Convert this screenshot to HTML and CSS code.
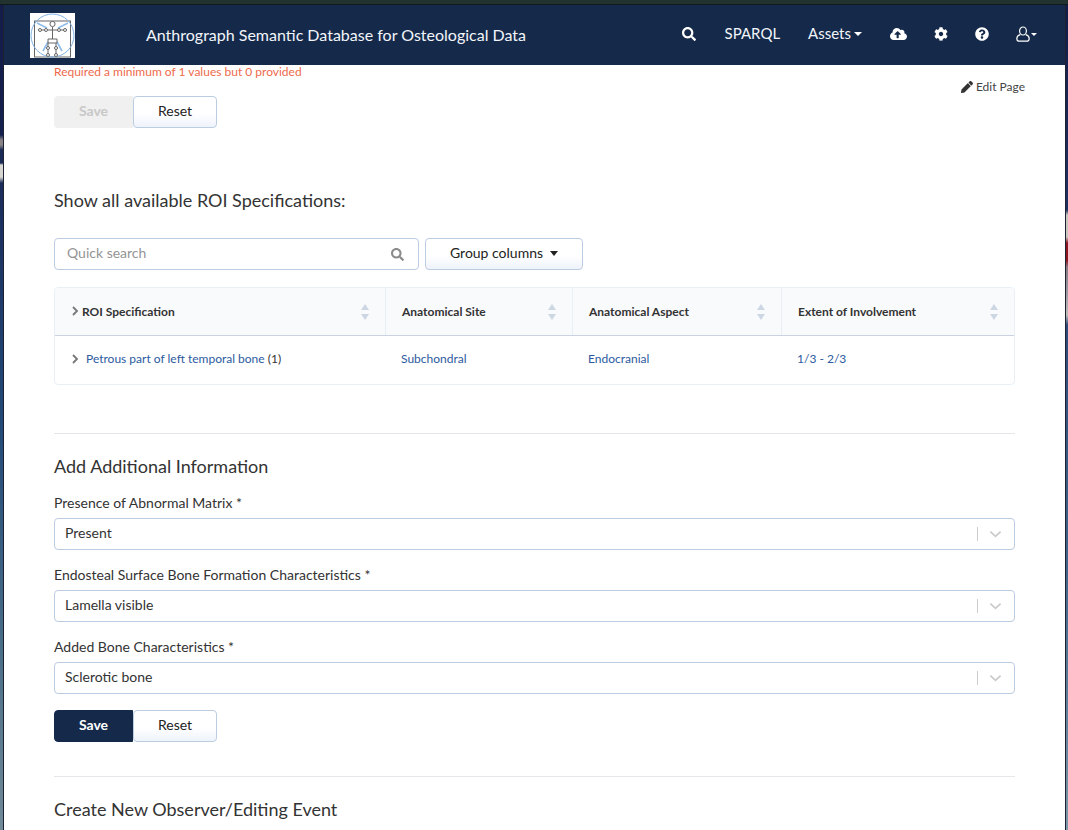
FILE: index.html
```html
<!DOCTYPE html>
<html lang="en">
<head>
    <meta charset="UTF-8">
    <meta name="viewport" content="width=device-width, initial-scale=1.0">
    <title>Anthrograph Semantic Database for Osteological Data</title>
    <link rel="stylesheet" href="styles.css">
</head>
<body>
    <div class="desk-top"></div>
    <div class="desk">
        <div class="desk-side desk-left"></div>
        <div class="window">
            <nav class="navbar">
                <div class="logo">
                    <svg width="45" height="45" viewBox="0 0 45 45">
                        <rect x="4.5" y="8" width="36" height="36" fill="none" stroke="#666" stroke-width="1"/>
                        <circle cx="22.5" cy="22.5" r="21.5" fill="none" stroke="#7fb2e5" stroke-width="1"/>
                        <path d="M7 10l10 5M38 10l-10 5M13 38l5-9M32 38l-5-9" fill="none" stroke="#8fbcea" stroke-width="1.6"/>
                        <circle cx="22.5" cy="11" r="2.6" fill="#fff" stroke="#666" stroke-width="1"/>
                        <path d="M22.5 14v12M8 17h29M18 26h9v4h-9zM18 30v13M26 30v13" fill="none" stroke="#666" stroke-width="1"/>
                        <circle cx="10" cy="17" r="1.5" fill="#fff" stroke="#666"/>
                        <circle cx="16" cy="17" r="1.5" fill="#fff" stroke="#666"/>
                        <circle cx="29" cy="17" r="1.5" fill="#fff" stroke="#666"/>
                        <circle cx="35" cy="17" r="1.5" fill="#fff" stroke="#666"/>
                        <circle cx="18" cy="35" r="1.5" fill="#fff" stroke="#666"/>
                        <circle cx="26" cy="35" r="1.5" fill="#fff" stroke="#666"/>
                        <circle cx="18" cy="42" r="1.5" fill="#fff" stroke="#666"/>
                        <circle cx="26" cy="42" r="1.5" fill="#fff" stroke="#666"/>
                    </svg>
                </div>
                <div class="brand">Anthrograph Semantic Database for Osteological Data</div>
                <div class="nav-items">
                    <svg class="nav-search" viewBox="0 0 512 512"><path d="M505 442.7L405.3 343c-4.5-4.5-10.6-7-17-7H372c27.6-35.3 44-79.7 44-128C416 93.1 322.9 0 208 0S0 93.1 0 208s93.1 208 208 208c48.3 0 92.7-16.4 128-44v16.3c0 6.4 2.5 12.5 7 17l99.7 99.7c9.4 9.4 24.6 9.4 33.9 0l28.3-28.3c9.4-9.4 9.4-24.6.1-34zM208 336c-70.7 0-128-57.2-128-128 0-70.7 57.2-128 128-128 70.7 0 128 57.2 128 128 0 70.7-57.2 128-128 128z"/></svg>
                    <span class="nav-sparql">SPARQL</span>
                    <span class="nav-assets">Assets<i class="caret"></i></span>
                    <svg class="nav-cloud" viewBox="0 0 640 512"><path d="M537.6 226.6c4.1-10.7 6.4-22.4 6.4-34.6 0-53-43-96-96-96-19.7 0-38.1 6-53.3 16.2C367 64.2 315.3 32 256 32c-88.4 0-160 71.6-160 160 0 2.7.1 5.4.2 8.1C40.2 219.8 0 273.2 0 336c0 79.5 64.5 144 144 144h368c70.7 0 128-57.3 128-128 0-61.9-44-113.6-102.4-125.4zM393.4 288H328v112c0 8.8-7.2 16-16 16h-48c-8.8 0-16-7.2-16-16V288h-65.4c-14.3 0-21.4-17.2-11.3-27.3l105.4-105.4c6.2-6.2 16.4-6.2 22.6 0l105.4 105.4c10.1 10.1 2.9 27.3-11.3 27.3z"/></svg>
                    <svg class="nav-cog" viewBox="0 0 512 512"><path d="M487.4 315.7l-42.6-24.6c4.3-23.2 4.3-47 0-70.2l42.6-24.6c4.9-2.8 7.1-8.6 5.5-14-11.1-35.6-30-67.8-54.7-94.6-3.8-4.1-10-5.1-14.8-2.3L380.8 110c-17.9-15.4-38.5-27.3-60.8-35.1V25.8c0-5.6-3.9-10.5-9.4-11.7-36.7-8.2-74.3-7.8-109.2 0-5.5 1.2-9.4 6.1-9.4 11.7V75c-22.2 7.9-42.8 19.8-60.8 35.1L88.7 85.5c-4.9-2.8-11-1.9-14.8 2.3-24.7 26.7-43.6 58.9-54.7 94.6-1.7 5.4.6 11.2 5.5 14L67.3 221c-4.3 23.2-4.3 47 0 70.2l-42.6 24.6c-4.9 2.8-7.1 8.6-5.5 14 11.1 35.6 30 67.8 54.7 94.6 3.8 4.1 10 5.1 14.8 2.3l42.6-24.6c17.9 15.4 38.5 27.3 60.8 35.1v49.2c0 5.6 3.9 10.5 9.4 11.7 36.7 8.2 74.3 7.8 109.2 0 5.5-1.2 9.4-6.1 9.4-11.7v-49.2c22.2-7.9 42.8-19.8 60.8-35.1l42.6 24.6c4.9 2.8 11 1.9 14.8-2.3 24.7-26.7 43.6-58.9 54.7-94.6 1.5-5.5-.7-11.3-5.6-14.1zM256 336c-44.1 0-80-35.9-80-80s35.9-80 80-80 80 35.9 80 80-35.9 80-80 80z"/></svg>
                    <svg class="nav-help" viewBox="0 0 512 512"><path d="M504 256c0 136.997-111.043 248-248 248S8 392.997 8 256C8 119.083 119.043 8 256 8s248 111.083 248 248zM262.655 90c-54.497 0-89.255 22.957-116.549 63.758-3.536 5.286-2.353 12.415 2.715 16.258l34.699 26.31c5.205 3.947 12.621 3.008 16.665-2.122 17.864-22.658 30.113-35.797 57.303-35.797 20.429 0 45.698 13.148 45.698 32.958 0 14.976-12.363 22.667-32.534 33.976C247.128 238.528 216 254.941 216 296v4c0 6.627 5.373 12 12 12h56c6.627 0 12-5.373 12-12v-1.333c0-28.462 83.186-29.647 83.186-106.667 0-58.002-60.165-102-116.531-102zM256 338c-25.365 0-46 20.635-46 46 0 25.364 20.635 46 46 46s46-20.636 46-46c0-25.365-20.635-46-46-46z"/></svg>
                    <span class="nav-user">
                        <svg viewBox="0 0 14 16" width="14" height="16"><ellipse cx="7" cy="5" rx="3.4" ry="4" fill="none" stroke="#fff" stroke-width="1.2"/><path d="M4.2 8.6C2 9.4 .8 10.6.8 12.4c0 1.8 1 2.8 2.6 2.8h7.2c1.6 0 2.6-1 2.6-2.8 0-1.8-1.2-3-3.4-3.8" fill="none" stroke="#fff" stroke-width="1.2"/></svg><i class="caret caret-small"></i>
                    </span>
                </div>
            </nav>

            <main class="content">
                <div class="top-row">
                    <div>
                        <div class="error-text">Required a minimum of 1 values but 0 provided</div>
                        <div class="btn-row">
                            <button class="btn btn-disabled">Save</button>
                            <button class="btn btn-light">Reset</button>
                        </div>
                    </div>
                    <div class="edit-page">
                        <svg viewBox="0 0 512 512"><path d="M497.9 142.1l-46.1 46.1c-4.7 4.7-12.3 4.7-17 0l-111-111c-4.7-4.7-4.7-12.3 0-17l46.1-46.1c18.7-18.7 49.1-18.7 67.9 0l60.1 60.1c18.8 18.7 18.8 49.1 0 67.9zM284.2 99.8L21.6 362.4.4 483.9c-2.9 16.4 11.4 30.6 27.8 27.8l121.5-21.3 262.6-262.6c4.7-4.7 4.7-12.3 0-17l-111-111c-4.8-4.7-12.4-4.7-17.1 0z"/></svg>
                        Edit Page
                    </div>
                </div>

                <h2 class="section-title roi-title">Show all available ROI Specifications:</h2>

                <div class="toolbar">
                    <div class="quick-search">
                        <span>Quick search</span>
                        <svg viewBox="0 0 512 512"><path d="M505 442.7L405.3 343c-4.5-4.5-10.6-7-17-7H372c27.6-35.3 44-79.7 44-128C416 93.1 322.9 0 208 0S0 93.1 0 208s93.1 208 208 208c48.3 0 92.7-16.4 128-44v16.3c0 6.4 2.5 12.5 7 17l99.7 99.7c9.4 9.4 24.6 9.4 33.9 0l28.3-28.3c9.4-9.4 9.4-24.6.1-34zM208 336c-70.7 0-128-57.2-128-128 0-70.7 57.2-128 128-128 70.7 0 128 57.2 128 128 0 70.7-57.2 128-128 128z"/></svg>
                    </div>
                    <button class="btn btn-light btn-group">Group columns<i class="caret caret-dark"></i></button>
                </div>

                <div class="table">
                    <div class="table-head">
                        <div class="th th-first">
                            <svg class="chev" viewBox="0 0 8 12"><path d="M2 2l4 4-4 4" fill="none" stroke="#777" stroke-width="1.8"/></svg>
                            <span>ROI Specification</span>
                            <i class="sort"></i>
                        </div>
                        <div class="th"><span>Anatomical Site</span><i class="sort"></i></div>
                        <div class="th"><span>Anatomical Aspect</span><i class="sort"></i></div>
                        <div class="th th-last"><span>Extent of Involvement</span><i class="sort"></i></div>
                    </div>
                    <div class="table-row">
                        <div class="td td-first">
                            <svg class="chev" viewBox="0 0 8 12"><path d="M2 2l4 4-4 4" fill="none" stroke="#777" stroke-width="1.8"/></svg>
                            <span class="link">Petrous part of left temporal bone</span>&nbsp;<span class="count">(1)</span>
                        </div>
                        <div class="td link">Subchondral</div>
                        <div class="td link">Endocranial</div>
                        <div class="td link">1/3 - 2/3</div>
                    </div>
                </div>

                <hr class="divider divider-info">

                <h2 class="section-title">Add Additional Information</h2>

                <div class="field field-first">
                    <label>Presence of Abnormal Matrix *</label>
                    <div class="select"><span>Present</span><i class="select-sep"></i><svg viewBox="0 0 14 8"><path d="M1.5 1.5L7 6.5l5.5-5" fill="none" stroke="#ccc" stroke-width="2"/></svg></div>
                </div>
                <div class="field">
                    <label>Endosteal Surface Bone Formation Characteristics *</label>
                    <div class="select"><span>Lamella visible</span><i class="select-sep"></i><svg viewBox="0 0 14 8"><path d="M1.5 1.5L7 6.5l5.5-5" fill="none" stroke="#ccc" stroke-width="2"/></svg></div>
                </div>
                <div class="field">
                    <label>Added Bone Characteristics *</label>
                    <div class="select"><span>Sclerotic bone</span><i class="select-sep"></i><svg viewBox="0 0 14 8"><path d="M1.5 1.5L7 6.5l5.5-5" fill="none" stroke="#ccc" stroke-width="2"/></svg></div>
                </div>

                <div class="btn-row btn-row-form">
                    <button class="btn btn-primary">Save</button>
                    <button class="btn btn-light">Reset</button>
                </div>

                <hr class="divider divider-event">

                <h2 class="section-title">Create New Observer/Editing Event</h2>
            </main>
        </div>
        <div class="desk-side desk-right"></div>
    </div>
</body>
</html>
```

FILE: styles.css
```css
html, body {
    margin: 0;
    height: 830px;
    overflow: hidden;
}
body {
    font-family: Lato, "Open Sans", sans-serif;
    font-size: 14px;
    color: #333;
    background: #1a2a50;
}
.desk-top {
    height: 4px;
    background: #22322f;
    border-bottom: 1px solid #0e1a1c;
}
.desk {
    display: flex;
    height: 825px;
}
.desk-side {
    width: 3px;
    flex: none;
    border-style: solid;
    border-color: #1c2233;
    border-width: 0;
}
.desk-left {
    border-right-width: 1px;
    background: linear-gradient(180deg, #141c48 0, #14204e 130px, #8a8488 135px, #8a8488 140px, #1a2a55 145px, #1a2a55 158px, #d8d6d0 160px, #d8d6d0 172px, #1a2c5a 178px, #234a78 420px, #4a6e88 640px, #708a98 825px);
}
.desk-right {
    border-left-width: 1px;
    width: 2px;
    background: linear-gradient(180deg, #141c48 0, #1e3060 205px, #c8c8c0 210px, #c8c8c0 232px, #8e1420 238px, #8e1420 255px, #8a7a80 262px, #9a96a0 285px, #c0bcb8 310px, #2e4a78 320px, #3e6488 560px, #7d98a8 825px);
}
.window {
    flex: 1;
    min-width: 0;
    background: #fff;
    overflow: hidden;
}

/* navbar */
.navbar {
    display: flex;
    align-items: center;
    height: 60px;
    padding: 0 28px 0 26px;
    background: #152a4a;
    color: #f2f5fa;
}
.logo {
    width: 45px;
    height: 45px;
    background: #fff;
}
.logo svg {
    display: block;
}
.brand {
    margin-left: 71px;
    font-size: 16px;
    line-height: 24px;
}
.nav-items {
    display: flex;
    align-items: center;
    margin-left: auto;
    margin-bottom: 2px;
    font-size: 15px;
}
.nav-items svg {
    fill: #fff;
    display: block;
}
.nav-search { width: 14px; height: 14px; margin-right: 29px; }
.nav-sparql { margin-bottom: 2px; }
.nav-assets { margin-left: 28px; margin-right: 28px; margin-bottom: 2px; }
.nav-cloud { width: 17px; height: 14px; margin-right: 27px; }
.nav-cog { width: 14px; height: 14px; margin-right: 27px; }
.nav-help { width: 14px; height: 14px; margin-right: 27px; }
.nav-user { display: flex; align-items: center; }
.caret {
    display: inline-block;
    margin-left: 3px;
    vertical-align: 3px;
    border-top: 4px solid #fff;
    border-left: 4px solid transparent;
    border-right: 4px solid transparent;
}
.caret-small {
    margin-left: 1px;
    vertical-align: 0;
    border-top-width: 3.5px;
    border-left-width: 3.5px;
    border-right-width: 3.5px;
}
.caret-dark {
    margin-left: 7px;
    vertical-align: 2px;
    border-top: 5px solid #222;
    border-left-width: 4.5px;
    border-right-width: 4.5px;
}

/* content */
.content {
    padding: 0 50px;
}
.top-row {
    display: flex;
    justify-content: space-between;
}
.error-text {
    font-size: 12px;
    line-height: 13px;
    color: #ee6a4c;
}
.btn-row {
    display: flex;
    margin-top: 18px;
}
.btn {
    height: 32px;
    padding: 0 0 3px;
    font-family: inherit;
    font-size: 14px;
    border-radius: 4px;
    border: 1px solid transparent;
    color: #222;
}
.btn-row .btn:first-child {
    width: 79px;
    border-radius: 4px 0 0 4px;
    font-weight: 700;
}
.btn-row .btn:last-child {
    width: 84px;
}
.btn-disabled {
    background: #f0f0f0;
    border-color: #f0f0f0;
    color: #c8c8c8;
}
.btn-primary {
    background: #152a4a;
    border-color: #152a4a;
    color: #fff;
}
.btn-light {
    background: linear-gradient(180deg, #fff 55%, #eef3fb 100%);
    border-color: #bccde2;
}
.edit-page {
    display: flex;
    align-items: center;
    align-self: flex-start;
    margin-top: 15px;
    margin-right: -10px;
    font-size: 12px;
    line-height: 14px;
    color: #444;
}
.edit-page svg {
    width: 12px;
    height: 12px;
    margin-right: 3px;
    fill: #333;
}
.section-title {
    margin: 0;
    font-size: 18px;
    font-weight: 400;
    line-height: 22px;
    color: #333;
}
.roi-title {
    margin-top: 61px;
}

/* search + group */
.toolbar {
    display: flex;
    gap: 6px;
    margin-top: 27px;
}
.quick-search {
    display: flex;
    align-items: center;
    justify-content: space-between;
    box-sizing: border-box;
    width: 365px;
    height: 32px;
    padding: 0 14px 0 12px;
    border: 1px solid #bccde2;
    border-radius: 4px;
    color: #949494;
}
.quick-search span {
    margin-bottom: 3px;
}
.quick-search svg {
    width: 13px;
    height: 13px;
    fill: #8a8a8a;
}
.btn-group {
    width: 158px;
}

/* table */
.table {
    margin-top: 17px;
    border: 1px solid #e9eff7;
    border-radius: 4px;
    font-size: 12px;
}
.table-head, .table-row {
    display: grid;
    grid-template-columns: 331px 187px 209px 1fr;
}
.table-head {
    height: 47px;
    background: #f9fafc;
    border-bottom: 1px solid #c9d3e2;
    border-radius: 4px 4px 0 0;
    font-weight: 700;
    color: #333;
}
.th {
    display: flex;
    align-items: center;
    justify-content: space-between;
    padding: 0 15px 0 16px;
    border-right: 1px solid #e9eff7;
}
.th-first {
    padding-left: 16px;
}
.th-first span {
    flex: 1;
}
.th-first .chev {
    margin-bottom: 2px;
}
.th-last {
    border-right: 0;
}
.chev {
    width: 8px;
    height: 12px;
    margin-right: 3px;
}
.sort {
    position: relative;
    width: 9px;
    height: 16px;
    flex: none;
}
.sort::before, .sort::after {
    content: "";
    position: absolute;
    left: 0;
    border-left: 4.5px solid transparent;
    border-right: 4.5px solid transparent;
}
.sort::before {
    top: 0;
    border-bottom: 6px solid #cdd6e3;
}
.sort::after {
    bottom: 0;
    border-top: 6px solid #cdd6e3;
}
.table-row {
    height: 48px;
    align-items: center;
    padding-bottom: 3px;
    box-sizing: border-box;
}
.td {
    padding-left: 15px;
}
.td-first {
    display: flex;
    align-items: center;
    padding-left: 16px;
}
.td-first .chev {
    margin-right: 7px;
}
.link {
    color: #2c5a9e;
}
.count {
    color: #333;
}

/* form */
.divider {
    margin: 0;
    border: 0;
    border-top: 1px solid #e4e6ea;
}
.divider-info {
    margin-top: 48px;
    margin-bottom: 21px;
}
.field {
    margin-top: 17px;
}
.field-first {
    margin-top: 18px;
}
.field label {
    display: block;
    height: 16px;
    line-height: 16px;
    margin-bottom: 7px;
    color: #333;
}
.select {
    display: flex;
    align-items: center;
    box-sizing: border-box;
    height: 32px;
    padding: 0 12px 0 10px;
    border: 1px solid #bccde2;
    border-radius: 4px;
    color: #333;
}
.select span {
    flex: 1;
    margin-bottom: 3px;
}
.select-sep {
    width: 1px;
    height: 14px;
    margin-right: 11px;
    background: #ccc;
}
.select svg {
    width: 13px;
    height: 8px;
}
.btn-row-form {
    margin-top: 16px;
}
.divider-event {
    margin-top: 34px;
    margin-bottom: 21px;
}
```
